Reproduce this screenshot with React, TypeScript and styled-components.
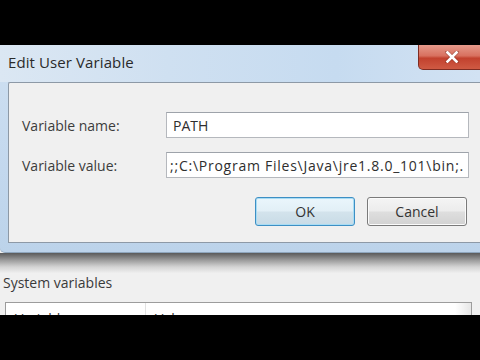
import React from 'react'
import styled, { createGlobalStyle } from 'styled-components'

const GlobalStyle = createGlobalStyle`
  html, body {
    margin: 0;
    padding: 0;
    background: #000;
  }
  * {
    box-sizing: border-box;
  }
`

const Screen = styled.div`
  width: 480px;
  height: 360px;
  background: #000;
  display: flex;
  flex-direction: column;
  overflow: hidden;
  font-family: 'Open Sans', 'Noto Sans', sans-serif;
  color: #3a3a3a;
`

const Letterbox = styled.div`
  height: 45px;
  flex: none;
  background: #000;
`

const Scene = styled.div`
  height: 270px;
  flex: none;
  background: #f0f0f0;
  display: flex;
  flex-direction: column;
  overflow: hidden;
`

const Dialog = styled.div`
  width: 100%;
  display: flex;
  flex-direction: column;
  padding: 0 0 9px 8px;
  background: linear-gradient(180deg, #cfe0f1 0%, #c3d8ee 60%, #bcd3ea 100%);
  border-bottom: 1px solid #8fa6bd;
  border-bottom-left-radius: 5px;
`

const TitleBar = styled.div`
  height: 37px;
  margin-left: -8px;
  padding-left: 8px;
  display: flex;
  justify-content: space-between;
  align-items: flex-start;
  background: linear-gradient(90deg, #dbe7f3 0%, #cfe0f1 35%, #c6dbf0 70%, #d2e2f3 100%);
`

const Title = styled.div`
  font-size: 15px;
  line-height: 35px;
  color: #2a2a2a;
  letter-spacing: 0.1px;
`

const CloseButton = styled.div`
  width: 68px;
  height: 25px;
  margin-right: -6px;
  border: 1px solid #7e2c22;
  border-top: none;
  border-bottom-left-radius: 5px;
  background: linear-gradient(180deg, #e59a8b 0%, #d8705f 45%, #c2412e 55%, #cf5a43 100%);
  display: flex;
  align-items: center;
  justify-content: flex-start;
  padding-left: 26px;
`

const Client = styled.div`
  background: #f0f0f0;
  border: 1px solid #8d99a6;
  border-right: none;
  border-top-left-radius: 2px;
  padding: 29px 11px 16px 13px;
  display: flex;
  flex-direction: column;
  gap: 14px;
`

const FieldRow = styled.div`
  display: flex;
  align-items: center;
`

const Label = styled.div`
  width: 144px;
  flex: none;
  font-size: 14px;
  color: #3c3c3c;
`

const Input = styled.div<{ $end?: boolean }>`
  flex: 1;
  height: 26px;
  background: #fff;
  border: 1px solid #b5b8bd;
  border-top-color: #9ea3aa;
  padding: 0 4px 0 6px;
  display: flex;
  align-items: center;
  justify-content: ${(p) => (p.$end ? 'flex-end' : 'flex-start')};
  overflow: hidden;
  white-space: nowrap;
  font-size: 14px;
  letter-spacing: ${(p) => (p.$end ? '0.75px' : '0')};
  color: #2e2e2e;
`

const ButtonRow = styled.div`
  display: flex;
  justify-content: flex-end;
  gap: 12px;
  margin-top: 5px;
  padding-right: 2px;
`

const Button = styled.div<{ $default?: boolean }>`
  width: 100px;
  height: 29px;
  border-radius: 3px;
  border: 1px solid ${(p) => (p.$default ? '#3d8fc4' : '#7a7a7a')};
  box-shadow: inset 0 0 0 1px ${(p) => (p.$default ? '#a8dcf4' : '#fbfbfb')};
  background: ${(p) =>
    p.$default
      ? 'linear-gradient(180deg, #eaf6fc 0%, #e2eff6 48%, #d3e3ec 52%, #c8dbe6 100%)'
      : 'linear-gradient(180deg, #f4f4f4 0%, #ececec 48%, #dedede 52%, #d2d2d2 100%)'};
  display: flex;
  align-items: center;
  justify-content: center;
  font-size: 14px;
  color: #333;
`

const Shadow = styled.div`
  height: 20px;
  flex: none;
  background: linear-gradient(180deg, #5a5a5a 0%, #9a9a9a 35%, #d4d4d4 70%, #efefef 100%);
`

const SectionTitle = styled.div`
  font-size: 14px;
  line-height: 19px;
  padding-left: 3px;
  color: #3a3a3a;
`

const ListBox = styled.div`
  margin: 10px 8px 0 5px;
  flex: 1;
  background: #fff;
  border: 1px solid #9c9c9c;
  border-bottom: none;
  display: flex;
  align-items: flex-start;
`

const HeaderCell = styled.div<{ $width?: number }>`
  width: ${(p) => (p.$width ? `${p.$width}px` : 'auto')};
  flex: ${(p) => (p.$width ? 'none' : '1')};
  padding: 6px 0 0 9px;
  font-size: 14px;
  line-height: 19px;
  color: #333;
  border-right: ${(p) => (p.$width ? '1px solid #e2e2e2' : 'none')};
  height: 100%;
`

const Corner = styled.div`
  width: 16px;
  height: 100%;
  background: linear-gradient(90deg, #fff, #e6e6e6);
`

const CloseGlyph = () => (
  <svg width='14' height='12' viewBox='0 0 14 12'>
    <path
      d='M2 1 L12 11 M12 1 L2 11'
      stroke='#5a1d14'
      strokeWidth='4'
      strokeLinecap='round'
      opacity='0.35'
    />
    <path
      d='M2.5 1.5 L11.5 10.5 M11.5 1.5 L2.5 10.5'
      stroke='#fff'
      strokeWidth='2.6'
      strokeLinecap='square'
    />
  </svg>
)

const App = () => {
  return (
    <>
      <GlobalStyle />
      <Screen>
        <Letterbox />
        <Scene>
          <Dialog>
            <TitleBar>
              <Title>Edit User Variable</Title>
              <CloseButton>
                <CloseGlyph />
              </CloseButton>
            </TitleBar>
            <Client>
              <FieldRow>
                <Label>Variable name:</Label>
                <Input>PATH</Input>
              </FieldRow>
              <FieldRow>
                <Label>Variable value:</Label>
                <Input $end>;;C:\Program Files\Java\jre1.8.0_101\bin;.</Input>
              </FieldRow>
              <ButtonRow>
                <Button $default>OK</Button>
                <Button>Cancel</Button>
              </ButtonRow>
            </Client>
          </Dialog>
          <Shadow />
          <SectionTitle>System variables</SectionTitle>
          <ListBox>
            <HeaderCell $width={140}>Variable</HeaderCell>
            <HeaderCell>Value</HeaderCell>
            <Corner />
          </ListBox>
        </Scene>
        <Letterbox />
      </Screen>
    </>
  )
}

export default App
